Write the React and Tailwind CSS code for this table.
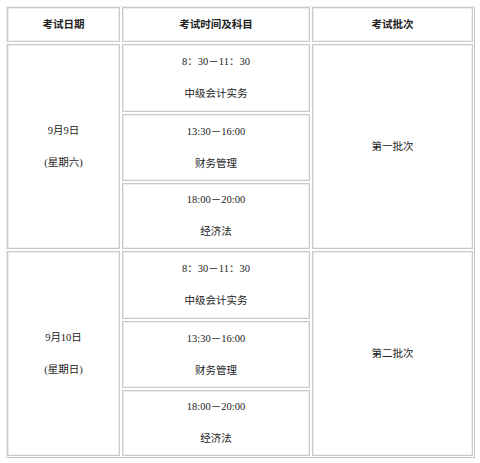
const sessions = [
    {
        date: '9月9日',
        week: '(星期六)',
        batch: '第一批次',
        slots: [
            { time: '8：30－11：30', subject: '中级会计实务' },
            { time: '13:30－16:00', subject: '财务管理' },
            { time: '18:00－20:00', subject: '经济法' },
        ],
    },
    {
        date: '9月10日',
        week: '(星期日)',
        batch: '第二批次',
        slots: [
            { time: '8：30－11：30', subject: '中级会计实务' },
            { time: '13:30－16:00', subject: '财务管理' },
            { time: '18:00－20:00', subject: '经济法' },
        ],
    },
];

const cell = 'flex flex-col items-center justify-center border border-[#cacaca] bg-white shadow-[inset_1px_1px_0_#ececec,inset_-1px_-1px_0_#f0f0f0]';

export default function App() {
    return (
        <div className="min-h-screen bg-white pt-[6px] pl-[6px] font-['Liberation_Serif','Noto_Sans_CJK_SC',serif] text-[10.5px] text-[#222]">
            <div className="inline-block border border-t-[#ececec] border-l-[#ececec] border-r-[#c4c4c4] border-b-[#c4c4c4] pr-[1px] pb-[1px]">
                <div className="grid grid-cols-[113px_188px_161px] grid-rows-[35px_68px_67px_66px_68px_67px_66px] gap-[2px]">
                    {/* header */}
                    <div className={`${cell} font-bold`}>考试日期</div>
                    <div className={`${cell} font-bold`}>考试时间及科目</div>
                    <div className={`${cell} font-bold`}>考试批次</div>

                    {sessions.map((s, i) => (
                        <div key={s.date} className="contents">
                            <div className={`${cell} row-span-3 ${i === 0 ? 'row-start-2' : 'row-start-5'} col-start-1 leading-[32px]`}>
                                <div>{s.date}</div>
                                <div>{s.week}</div>
                            </div>
                            {s.slots.map((slot, j) => (
                                <div
                                    key={slot.subject}
                                    className={`${cell} col-start-2 leading-[32px]`}
                                    style={{ gridRowStart: 2 + i * 3 + j }}
                                >
                                    <div>{slot.time}</div>
                                    <div>{slot.subject}</div>
                                </div>
                            ))}
                            <div className={`${cell} row-span-3 ${i === 0 ? 'row-start-2' : 'row-start-5'} col-start-3`}>
                                {s.batch}
                            </div>
                        </div>
                    ))}
                </div>
            </div>
        </div>
    );
}
